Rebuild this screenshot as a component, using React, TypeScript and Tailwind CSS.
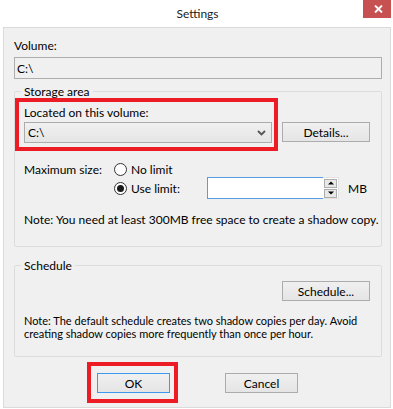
import React from 'react';

const font = { fontFamily: 'Lato, "Noto Sans", sans-serif' };

// Win8 style push button
const Btn: React.FC<{ label: string; w: string; primary?: boolean }> = ({ label, w, primary }) => (
  <div
    className={`${w} h-[20px] flex items-center justify-center border bg-gradient-to-b from-[#f0f0f0] to-[#e5e5e5] text-[12px] text-black ${
      primary ? 'border-[#3c99ee]' : 'border-[#acacac]'
    }`}
  >
    {label}
  </div>
);

const Radio: React.FC<{ checked?: boolean }> = ({ checked }) => (
  <div className="w-[13px] h-[13px] rounded-full border border-[#333] bg-white flex items-center justify-center">
    {checked && <div className="w-[7px] h-[7px] rounded-full bg-[#1a1a1a]" />}
  </div>
);

const Legend: React.FC<{ children: React.ReactNode }> = ({ children }) => (
  <legend className="ml-[6px] px-[3px] text-[12px] leading-[15px]">{children}</legend>
);

export default function App() {
  return (
    <div className="w-[393px] h-[409px] bg-white overflow-hidden text-black whitespace-nowrap" style={font}>
      {/* Title bar */}
      <div className="relative h-[27px] flex items-center justify-center">
        <span className="text-[12px] leading-[15px] text-[#222] pl-[2px]">Settings</span>
        <div className="absolute top-0 left-[363px] w-[28px] h-[18px] bg-[#c75050] flex items-center justify-center">
          <svg width="9" height="8" viewBox="0 0 9 8" className="ml-[3px]">
            <path d="M1 0.5 L8 7.5 M8 0.5 L1 7.5" stroke="white" strokeWidth="1.9" />
          </svg>
        </div>
      </div>

      {/* Dialog body */}
      <div className="ml-[3px] w-[388px] h-[381px] border border-[#dadada] bg-[#f0f0f0] pl-[10px] pr-[8px] text-[12px] leading-[15px]">
        <div className="mt-[10px]">Volume:</div>
        <div className="mt-[4px] h-[22px] border border-[#adadad] flex items-center pl-[2px]">C:\</div>

        {/* Storage area */}
        <fieldset className="mt-[5px] min-w-0 border border-[#dcdcdc] rounded-[2px]">
          <Legend>Storage area</Legend>
          <div className="-mt-[1px] flex items-end">
            <div className="w-[263px] border-4 border-[#ed1c24] pl-[5px] pr-[2px] pt-[3px] pb-[4px]">
              <div>Located on this volume:</div>
              <div className="mt-[2px] h-[21px] border border-[#acacac] bg-gradient-to-b from-[#f0f0f0] to-[#e5e5e5] flex items-center justify-between pl-[3px] pr-[5px]">
                <span>C:\</span>
                <svg width="9" height="6" viewBox="0 0 9 6">
                  <path d="M1 1 L4.5 4.5 L8 1" fill="none" stroke="#555" strokeWidth="1.8" />
                </svg>
              </div>
            </div>
            <div className="ml-[4px] mb-[9px]">
              <Btn label="Details..." w="w-[88px]" />
            </div>
          </div>

          <div className="mt-[11px] pl-[9px] flex">
            <div className="w-[90px]">Maximum size:</div>
            <div className="flex flex-col">
              <div className="h-[15px] flex items-center gap-[4px]">
                <Radio />
                <span>No limit</span>
              </div>
              <div className="h-[22px] flex items-center">
                <Radio checked />
                <span className="ml-[4px] w-[76px]">Use limit:</span>
                <div className="w-[116px] h-[22px] bg-white border border-[#569de5] border-r-0" />
                <div className="w-[16px] h-[22px] flex flex-col justify-center gap-[1px] bg-white border-r border-y border-[#e3e3e3]">
                  <div className="mx-[1px] h-[9px] border border-[#adadad] bg-[#e8e8e8] flex items-center justify-center">
                    <svg width="6" height="4" viewBox="0 0 6 4"><path d="M0 3.5 L3 0.5 L6 3.5 Z" fill="#000" /></svg>
                  </div>
                  <div className="mx-[1px] h-[9px] border border-[#adadad] bg-[#e8e8e8] flex items-center justify-center">
                    <svg width="6" height="4" viewBox="0 0 6 4"><path d="M0 0.5 L3 3.5 L6 0.5 Z" fill="#000" /></svg>
                  </div>
                </div>
                <span className="ml-[9px]">MB</span>
              </div>
            </div>
          </div>

          <div className="mt-[13px] pl-[9px] pb-[19px]">
            Note: You need at least 300MB free space to create a shadow copy.
          </div>
        </fieldset>

        {/* Schedule */}
        <fieldset className="mt-[11px] min-w-0 border border-[#dcdcdc] rounded-[2px]">
          <Legend>Schedule</Legend>
          <div className="mt-[8px] flex justify-end pr-[11px]">
            <Btn label="Schedule..." w="w-[88px]" />
          </div>
          <div className="mt-[13px] pl-[9px] pb-[16px] text-[11px] leading-[13px]">
            Note: The default schedule creates two shadow copies per day. Avoid
            <br />
            creating shadow copies more frequently than once per hour.
          </div>
        </fieldset>

        {/* Buttons */}
        <div className="mt-[5px] flex items-start">
          <div className="ml-[73px] border-4 border-[#ed1c24] pl-[6px] pr-[4px] pt-[7px] pb-[6px]">
            <Btn label="OK" w="w-[73px]" primary />
          </div>
          <div className="ml-[47px] mt-[11px]">
            <Btn label="Cancel" w="w-[73px]" />
          </div>
        </div>
      </div>
    </div>
  );
}
